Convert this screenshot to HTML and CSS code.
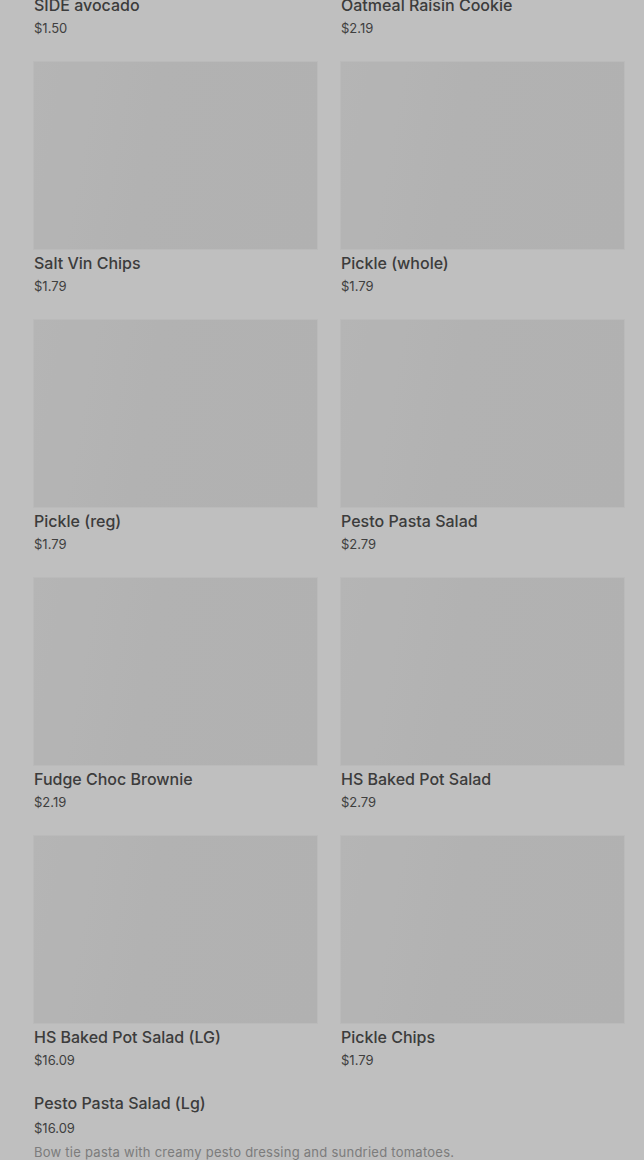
FILE: index.html
```html
<!DOCTYPE html>
<html lang="en">
<head>
    <meta charset="UTF-8">
    <meta name="viewport" content="width=device-width, initial-scale=1.0">
    <title>Menu</title>
    <link rel="stylesheet" href="styles.css">
</head>
<body>
    <div class="menu">
        <div class="grid">
            <div class="item">
                <div class="thumb"></div>
                <h3 class="name">SIDE avocado</h3>
                <p class="price">$1.50</p>
            </div>
            <div class="item">
                <div class="thumb"></div>
                <h3 class="name">Oatmeal Raisin Cookie</h3>
                <p class="price">$2.19</p>
            </div>
            <div class="item">
                <div class="thumb"></div>
                <h3 class="name">Salt Vin Chips</h3>
                <p class="price">$1.79</p>
            </div>
            <div class="item">
                <div class="thumb"></div>
                <h3 class="name">Pickle (whole)</h3>
                <p class="price">$1.79</p>
            </div>
            <div class="item">
                <div class="thumb"></div>
                <h3 class="name">Pickle (reg)</h3>
                <p class="price">$1.79</p>
            </div>
            <div class="item">
                <div class="thumb"></div>
                <h3 class="name">Pesto Pasta Salad</h3>
                <p class="price">$2.79</p>
            </div>
            <div class="item">
                <div class="thumb"></div>
                <h3 class="name">Fudge Choc Brownie</h3>
                <p class="price">$2.19</p>
            </div>
            <div class="item">
                <div class="thumb"></div>
                <h3 class="name">HS Baked Pot Salad</h3>
                <p class="price">$2.79</p>
            </div>
            <div class="item">
                <div class="thumb"></div>
                <h3 class="name">HS Baked Pot Salad (LG)</h3>
                <p class="price">$16.09</p>
            </div>
            <div class="item">
                <div class="thumb"></div>
                <h3 class="name">Pickle Chips</h3>
                <p class="price">$1.79</p>
            </div>
        </div>
        <div class="item wide">
            <h3 class="name">Pesto Pasta Salad (Lg)</h3>
            <p class="price">$16.09</p>
            <p class="desc">Bow tie pasta with creamy pesto dressing and sundried tomatoes.</p>
        </div>
    </div>
    <div class="overlay"></div>
</body>
</html>
```

FILE: styles.css
```css
body {
    margin: 0;
    font-family: Inter, "Noto Sans", Arial, sans-serif;
    background: #ffffff;
    overflow: hidden;
}

.menu {
    margin-top: -196px;
    padding: 0 20px 0 34px;
}

.grid {
    display: grid;
    grid-template-columns: 1fr 1fr;
    column-gap: 24px;
    row-gap: 24px;
}

.thumb {
    height: 187px;
    background: linear-gradient(100deg, #f2f2f2 0%, #eeeeee 40%, #ededed 100%);
    box-shadow: 0 0 0 1px #f8f8f8;
}

.name {
    margin: 4px 0 0;
    font-size: 16px;
    line-height: 20px;
    font-weight: 500;
    color: #505050;
}

.price {
    margin: 3px 0 0;
    font-size: 13px;
    line-height: 20px;
    letter-spacing: 0;
    color: #555555;
}

.wide {
    margin-top: 23px;
}

.wide .name {
    margin-top: 0;
}

.wide .price {
    margin-top: 5px;
}

.desc {
    margin: 4px 0 0;
    font-size: 13px;
    line-height: 20px;
    letter-spacing: 0.25px;
    color: #a6a6a6;
}

.overlay {
    position: fixed;
    inset: 0;
    background: rgba(0, 0, 0, 0.25);
}
```
